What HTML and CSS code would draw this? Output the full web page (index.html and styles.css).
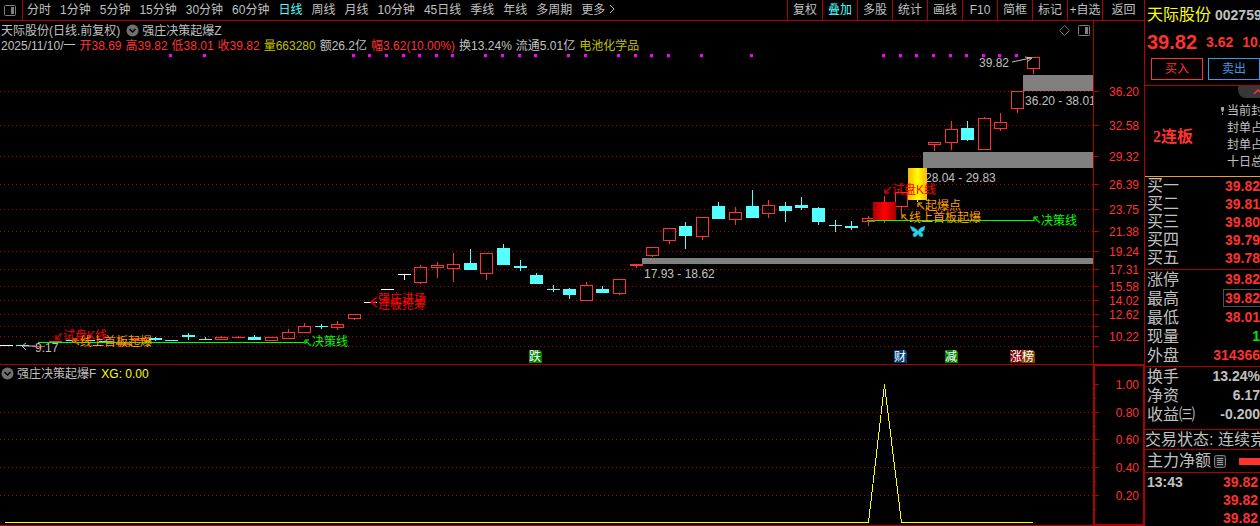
FILE: index.html
```
<!DOCTYPE html>
<html lang="zh-CN">
<head>
    <meta charset="UTF-8">
    <meta name="viewport" content="width=device-width, initial-scale=1.0">
    <title>天际股份 002759</title>
    <link rel="stylesheet" href="styles.css">
</head>
<body>

<div class="app">
    <main class="main">
        <!-- Period toolbar -->
        <nav class="toolbar">
            <button class="panel-toggle" aria-label="面板">
                <svg width="12" height="11" viewBox="0 0 12 11"><rect x="0.5" y="0.5" width="11" height="10" rx="1" fill="none" stroke="#808080"/><rect x="7" y="2" width="3" height="7" fill="#808080"/></svg>
            </button>
            <div class="periods">
                <button>分时</button>
                <button>1分钟</button>
                <button>5分钟</button>
                <button>15分钟</button>
                <button>30分钟</button>
                <button>60分钟</button>
                <button class="active">日线</button>
                <button>周线</button>
                <button>月线</button>
                <button>10分钟</button>
                <button>45日线</button>
                <button>季线</button>
                <button>年线</button>
                <button>多周期</button>
                <button>更多 <svg width="6" height="10" viewBox="0 0 6 10"><path d="M1 1l4 4-4 4" fill="none" stroke="#c0c0c0"/></svg></button>
            </div>
            <div class="tools">
                <button>复权</button>
                <button class="active">叠加</button>
                <button>多股</button>
                <button>统计</button>
                <button>画线</button>
                <button>F10</button>
                <button>简框</button>
                <button>标记</button>
                <button>+自选</button>
                <button class="back">返回</button>
            </div>
        </nav>

        <!-- Price chart -->
        <section class="pane">
            <svg class="chart" viewBox="0 21 1144 343">
                <defs>
                    <linearGradient id="gradRed">
                        <stop offset="0" stop-color="#a80000"/><stop offset="0.5" stop-color="#ff0000"/><stop offset="1" stop-color="#a80000"/>
                    </linearGradient>
                    <linearGradient id="gradYellow">
                        <stop offset="0" stop-color="#ffb400"/><stop offset="0.5" stop-color="#ffff00"/><stop offset="1" stop-color="#ffb400"/>
                    </linearGradient>
                    <clipPath id="plotClip"><rect x="0" y="21" width="1093" height="343"/></clipPath>
                </defs>
                <g id="grid" class="crisp"></g>
                <g class="crisp" fill="#808080">
                    <rect x="642" y="258" width="451" height="6"/>
                    <rect x="923" y="152" width="170" height="16"/>
                    <rect x="1023" y="75" width="70" height="16"/>
                </g>
                <g id="dots" class="crisp"></g>
                <g id="candles" class="crisp"></g>
                <g class="crisp">
                    <rect x="884" y="196" width="1" height="27" fill="#ff3232"/>
                    <rect x="873" y="202" width="23" height="18" fill="url(#gradRed)"/>
                    <rect x="917" y="200" width="1" height="2" fill="#ffff00"/>
                    <rect x="908" y="168" width="19" height="32" fill="url(#gradYellow)"/>
                    <rect x="38" y="342" width="270" height="1" fill="#00ff00"/>
                    <rect x="867" y="220" width="168" height="1" fill="#00ff00"/>
                </g>
                <!-- signal arrows -->
                <g fill="none">
                    <path d="M62 333l-6 6m0-4v4h4M891 187l-6 6m0-4v4h4M377 297l-6 5 6 5m-6-5h5" stroke="#d00000" stroke-width="1.5"/>
                    <path d="M305 340h4m-4 0v4m0-4l6 6M1034 217h4m-4 0v4m0-4l6 6" stroke="#00c800" stroke-width="1.5"/>
                    <path d="M73 339h4m-4 0v4m0-4l6 6M918 203h4m-4 0v4m0-4l6 6M902 215h4m-4 0v4m0-4l6 6" stroke="#d08000" stroke-width="1.5"/>
                    <path d="M35 346H22m4-3l-4 3 4 4M1012 62l19-4m-6-1l7 1-5 4" stroke="#c0c0c0"/>
                </g>
                <!-- butterfly mark -->
                <path d="M918 231c-2-3-5-4-8-5 1 3 2 6 5 6-2 1-3 3-1 5 2 0 3-1 4-3 1 2 2 3 4 3 2-2 1-4-1-5 3 0 4-3 4-6-3 1-6 2-7 5z" fill="#28d2e6" stroke="#0c7f90" stroke-width="0.5"/>
                <g class="label" clip-path="url(#plotClip)">
                    <text x="35" y="352">9.17</text>
                    <text x="979" y="67">39.82</text>
                    <text x="644" y="278">17.93 - 18.62</text>
                    <text x="925" y="182">28.04 - 29.83</text>
                    <text x="1025" y="105">36.20 - 38.01</text>
                    <g fill="#ff0000">
                        <text x="63" y="340">试盘K线</text>
                        <text x="378" y="303">强庄进场</text>
                        <text x="378" y="309">连板抢筹</text>
                        <text x="892" y="194">试盘K线</text>
                    </g>
                    <g fill="#ffa000">
                        <text x="80" y="346">线上首板起爆</text>
                        <text x="925" y="210">起爆点</text>
                        <text x="909" y="222">线上首板起爆</text>
                    </g>
                    <g fill="#00ff00">
                        <text x="312" y="346">决策线</text>
                        <text x="1041" y="225">决策线</text>
                    </g>
                </g>
                <!-- event badges -->
                <g class="badge">
                    <path d="M529 350h11l2 2v11h-13z" fill="#008000"/><text x="529" y="361">跌</text>
                    <path d="M894 350h11l2 2v11h-13z" fill="#003c78"/><text x="894" y="361">财</text>
                    <path d="M945 350h11l2 2v11h-13z" fill="#008000"/><text x="945" y="361">减</text>
                    <path d="M1010 350h12v13h-12z" fill="#800000"/><text x="1010" y="361">涨</text>
                    <path d="M1022 350h11l2 2v11h-13z" fill="#804000"/><text x="1022" y="361">榜</text>
                </g>
                <rect class="crisp" x="1093" y="21" width="1" height="343" fill="#b00000"/>
            </svg>
            <div class="legend">
                <div class="legend-row">
                    <span>天际股份(日线.前复权)</span>
                    <svg class="fold" width="13" height="13" viewBox="0 0 13 13"><circle cx="6.5" cy="6.5" r="6" fill="#707070"/><path d="M3.5 5l3 3 3-3" fill="none" stroke="#000" stroke-width="1.5"/></svg>
                    <span>强庄决策起爆Z</span>
                    <span class="legend-icons">
                        <svg width="11" height="11" viewBox="0 0 11 11"><path d="M5.5 0.5l5 5-5 5-5-5z" fill="none" stroke="#707070"/></svg>
                        <svg width="12" height="11" viewBox="0 0 12 11"><rect x="0.5" y="0.5" width="11" height="10" rx="1" fill="none" stroke="#808080"/><rect x="7" y="2" width="3" height="7" fill="#808080"/></svg>
                    </span>
                </div>
                <div class="legend-row quote-line">
                    <span>2025/11/10/一</span>
                    <span class="up">开38.69</span>
                    <span class="up">高39.82</span>
                    <span class="up">低38.01</span>
                    <span class="up">收39.82</span>
                    <span class="vol">量663280</span>
                    <span>额26.2亿</span>
                    <span class="up">幅3.62(10.00%)</span>
                    <span>换13.24%</span>
                    <span>流通5.01亿</span>
                    <span class="vol">电池化学品</span>
                </div>
            </div>
        </section>

        <!-- Indicator chart -->
        <section class="pane">
            <svg class="chart" viewBox="0 364 1144 162">
                <g id="subgrid" class="crisp"></g>
                <path class="crisp" d="M5 522.5H868.5L884.5 384.5L901.5 522.5H1033" fill="none" stroke="#ffff00"/>
                <g class="crisp" fill="#b00000">
                    <rect x="0" y="364" width="1144" height="1"/>
                    <rect x="0" y="525" width="1144" height="1"/>
                    <rect x="1093" y="364" width="51" height="2"/>
                    <rect x="1093" y="364" width="2" height="162"/>
                    <rect x="1143" y="364" width="1" height="162"/>
                    <rect x="1093" y="524" width="51" height="2"/>
                </g>
            </svg>
            <div class="legend">
                <div class="legend-row">
                    <svg width="13" height="13" viewBox="0 0 13 13"><circle cx="6.5" cy="6.5" r="6" fill="#707070"/><path d="M3.5 5l3 3 3-3" fill="none" stroke="#000" stroke-width="1.5"/></svg>
                    <span>强庄决策起爆F</span>
                    <span class="xg">XG: 0.00</span>
                </div>
            </div>
        </section>
    </main>

    <!-- Quote panel -->
    <aside class="side">
        <div class="stock"><span class="stock-name">天际股份</span><b>002759</b></div>
        <div class="price"><b class="last">39.82</b><b>3.62</b><b>10.00%</b></div>
        <div class="trade">
            <button class="buy">买入</button>
            <button class="sell">卖出</button>
        </div>
        <div class="limit">
            <b class="streak">2连板</b>
            <div class="tab"><svg width="10" height="6" viewBox="0 0 10 6"><path d="M1 5l4-4 4 4" fill="none" stroke="#ff3232" stroke-width="1.5"/></svg></div>
            <ul>
                <li class="first"><svg width="3" height="9" viewBox="0 0 3 9"><path d="M0 1h3v3L2 6H1L0 4zM1 7h1v2H1z" fill="#a0a0a0"/></svg>当前封单</li>
                <li>封单占成交</li>
                <li>封单占流通</li>
                <li>十日总涨停</li>
            </ul>
        </div>
        <table class="bids">
            <tr><th>买一</th><td>39.82</td></tr>
            <tr><th>买二</th><td>39.81</td></tr>
            <tr><th>买三</th><td>39.80</td></tr>
            <tr><th>买四</th><td>39.79</td></tr>
            <tr><th>买五</th><td>39.78</td></tr>
        </table>
        <table class="stats">
            <tr><th>涨停</th><td>39.82</td></tr>
            <tr><th>最高</th><td><span class="boxed">39.82</span></td></tr>
            <tr><th>最低</th><td>38.01</td></tr>
            <tr><th>现量</th><td class="down">1</td></tr>
            <tr><th>外盘</th><td>314366</td></tr>
        </table>
        <table class="stats plain">
            <tr><th>换手</th><td>13.24%</td></tr>
            <tr><th>净资</th><td>6.17</td></tr>
            <tr><th>收益㈢</th><td>-0.200</td></tr>
        </table>
        <div class="status">交易状态: 连续竞价</div>
        <div class="flow">
            <span>主力净额</span>
            <svg width="12" height="13" viewBox="0 0 12 13"><rect x="0.5" y="0.5" width="11" height="12" rx="2" fill="#202020" stroke="#808080"/><path d="M3 3.5h6M3 5.5h6M3 7.5h6M3 9.5h6" stroke="#a0a0a0"/></svg>
            <i class="flow-bar"></i>
        </div>
        <table class="ticks">
            <tr><th>13:43</th><td>39.82</td></tr>
            <tr><th></th><td>39.82</td></tr>
            <tr><th></th><td>39.82</td></tr>
        </table>
    </aside>
</div>

<script src="script.js"></script>
</body>
</html>
```
FILE: styles.css
```
* {
    box-sizing: border-box;
}
body {
    margin: 0;
    background: #000;
    color: #c0c0c0;
    font: 12px/14px "Liberation Sans", "Noto Sans CJK SC", sans-serif;
    overflow: hidden;
}
button {
    padding: 0;
    border: 0;
    background: none;
    color: inherit;
    font: inherit;
    white-space: nowrap;
    cursor: pointer;
}
.app {
    display: grid;
    grid-template-columns: minmax(0, 1fr) 116px;
    min-height: 100vh;
}

/* Toolbar */
.toolbar {
    display: flex;
    height: 21px;
    border-bottom: 1px solid #b00000;
}
.panel-toggle {
    width: 23px;
    border-right: 1px solid #b00000;
}
.panel-toggle svg {
    display: block;
    margin: 0 4px;
}
.periods {
    display: flex;
    gap: 9px;
    padding-left: 4px;
}
.tools {
    display: flex;
    margin-left: auto;
}
.tools button {
    width: 35px;
    border-left: 1px solid #b00000;
}
.tools .back {
    width: 42px;
}
.toolbar .active {
    color: #54ffff;
}

/* Charts */
.pane {
    position: relative;
}
.chart {
    display: block;
    width: 100%;
    height: auto;
}
.crisp {
    shape-rendering: crispEdges;
}
.label {
    fill: #c0c0c0;
}
.axis-label {
    fill: #ff3232;
    text-anchor: end;
}
.badge text {
    fill: #fff;
}
.legend {
    position: absolute;
    top: 2px;
    left: 0;
    right: 54px;
    padding-left: 1px;
}
.legend-row {
    display: flex;
    align-items: center;
    gap: 3px;
    height: 15px;
    white-space: nowrap;
}
.legend-row .fold {
    margin-left: 3px;
}
.quote-line {
    gap: 4px;
}
.legend-icons {
    display: flex;
    gap: 8px;
    margin-left: auto;
}
.up {
    color: #ff3232;
}
.vol {
    color: #c0c000;
}
.xg {
    color: #ffff00;
    margin-left: 2px;
}

/* Quote panel */
.side {
    border-left: 1px solid #b00000;
    overflow: hidden;
    white-space: nowrap;
}
.side b,
.side td {
    font-size: 14px;
    font-weight: bold;
}
.stock {
    display: flex;
    align-items: center;
    gap: 4px;
    height: 30px;
    padding-left: 2px;
}
.stock-name {
    color: #ffff00;
    font-size: 16px;
}
.price {
    display: flex;
    align-items: center;
    gap: 9px;
    height: 24px;
    padding-left: 2px;
    color: #ff3232;
}
.side .last {
    font-size: 20px;
}
.trade {
    display: flex;
    gap: 5px;
    height: 32px;
    padding: 4px 0 5px 6px;
    border-bottom: 1px solid #b00000;
}
.trade button {
    flex: 0 0 52px;
    border: 1px solid #ff3232;
    color: #ff3232;
}
.trade .sell {
    border-color: #4696e6;
    color: #4696e6;
}
.limit {
    position: relative;
    display: flex;
    align-items: center;
    height: 91px;
    padding: 12px 0 0 8px;
    border-bottom: 1px solid #e6a03c;
}
.side .streak {
    flex: 0 0 68px;
    color: #ff3232;
    font-family: "Liberation Serif", "Noto Sans CJK SC", serif;
    font-size: 16px;
}
.limit ul {
    margin: 0;
    padding: 0;
    list-style: none;
    line-height: 17px;
}
.limit li {
    padding-left: 6px;
}
.limit .first {
    padding-left: 0;
}
.limit li svg {
    margin-right: 3px;
}
.tab {
    position: absolute;
    top: 0;
    right: -18px;
    width: 40px;
    height: 12px;
    border-radius: 0 0 8px 8px;
    background: #373737;
    line-height: 10px;
    text-align: center;
}
table {
    width: 100%;
    border-collapse: collapse;
}
.side th {
    padding: 0 0 0 2px;
    font-size: 16px;
    font-weight: normal;
    text-align: left;
}
.side td {
    padding: 0;
    color: #ff3232;
    text-align: right;
}
.bids tr {
    height: 18px;
}
.bids {
    border-bottom: 2px solid #000;
    line-height: 18px;
}
.stats {
    margin-bottom: 1px;
    border-top: 1px solid #b00000;
    line-height: 19px;
}
.stats .down {
    color: #00e600;
}
.boxed {
    display: inline-block;
    padding-left: 1px;
    line-height: 16px;
    outline: 1px solid #505050;
}
.side .plain td {
    color: #c0c0c0;
}
.status {
    margin-top: 5px;
    border-top: 1px solid #b00000;
    border-bottom: 1px solid #b00000;
    font-size: 16px;
    line-height: 19px;
}
.flow {
    display: flex;
    align-items: center;
    gap: 3px;
    height: 23px;
    padding-left: 2px;
    border-bottom: 1px solid #b00000;
    font-size: 16px;
}
.flow-bar {
    flex: 1;
    height: 7px;
    margin-left: 10px;
    background: #ff3232;
}
.ticks {
    line-height: 18px;
}
.side .ticks th {
    font-size: 14px;
    font-weight: bold;
}
.side .ticks td {
    padding-right: 2px;
}
```
FILE: script.js
```
const RED = '#ff3232';
const CYAN = '#54ffff';
const WHITE = '#ffffff';
const LINE = '#b00000';

function add(parent, tag, attrs, text) {
    const el = document.createElementNS('http://www.w3.org/2000/svg', tag);
    for (const key in attrs) el.setAttribute(key, attrs[key]);
    if (text) el.textContent = text;
    parent.appendChild(el);
}

function bar(parent, x, y, width, height, fill) {
    add(parent, 'rect', { x, y, width, height, fill });
}

// Horizontal dotted line, tick and axis label
function level(parent, y, text, dotted) {
    if (dotted) {
        add(parent, 'path', { d: `M0 ${y + 0.5}H1093`, stroke: LINE, 'stroke-dasharray': '1 3' });
    }
    bar(parent, 1093, y, 6, 1, LINE);
    add(parent, 'text', { class: 'axis-label', x: 1139, y: y + 5 }, text);
}

const grid = document.getElementById('grid');
const levels = [
    [91, '36.20'], [125, '32.58'], [156, '29.32'], [184, '26.39'], [209, '23.75'],
    [231, '21.38'], [251, '19.24'], [269, '17.31'], [286, '15.58'], [300, '14.02'],
    [314, '12.62'], [326, ''], [336, '10.22'], [346, '']
];
levels.forEach(([y, text]) => level(grid, y, text, true));

const subgrid = document.getElementById('subgrid');
const subLevels = [[384, '1.00'], [412, '0.80'], [439, '0.60'], [467, '0.40'], [495, '0.20']];
subLevels.forEach(([y, text], i) => {
    level(subgrid, y, text, i > 0);
    bar(subgrid, 1093, y + 14, 3, 1, LINE);
});

const dots = document.getElementById('dots');
[169, 203, 352, 368, 385, 402, 418, 435, 451, 484, 501, 518, 534, 567, 584, 617, 634, 650, 667,
    700, 750, 882, 899, 915, 932, 949, 965, 982, 998, 1015].forEach(x => bar(dots, x, 54, 3, 3, '#ff00ff'));

// [left, body top, body bottom, high, low, color]
const candles = [
    [0, 345, 346, 345, 346, WHITE], [16, 345, 346, 345, 346, CYAN], [32, 346, 347, 346, 347, RED],
    [49, 341, 342, 341, 342, RED], [66, 340, 341, 339, 342, CYAN], [82, 340, 341, 340, 341, CYAN],
    [99, 341, 342, 340, 343, CYAN], [116, 343, 345, 343, 345, RED], [132, 338, 341, 338, 341, RED],
    [149, 338, 340, 337, 341, CYAN], [165, 340, 341, 340, 341, CYAN], [182, 335, 337, 333, 340, CYAN],
    [199, 339, 340, 337, 340, CYAN], [215, 337, 340, 336, 340, RED], [232, 337, 338, 336, 338, RED],
    [248, 337, 340, 335, 340, CYAN], [265, 337, 341, 337, 341, RED], [282, 332, 339, 329, 339, RED],
    [298, 326, 333, 323, 333, RED], [315, 326, 327, 324, 329, CYAN], [331, 324, 328, 321, 330, RED],
    [348, 314, 319, 314, 320, RED], [364, 302, 303, 302, 303, WHITE], [381, 289, 290, 289, 290, WHITE],
    [398, 274, 275, 274, 280, WHITE], [414, 267, 283, 265, 284, RED], [431, 265, 268, 262, 278, RED],
    [447, 264, 269, 253, 282, RED], [464, 263, 270, 249, 270, CYAN], [480, 253, 274, 253, 280, RED],
    [497, 248, 265, 244, 265, CYAN], [514, 266, 268, 260, 271, CYAN], [530, 275, 284, 273, 284, CYAN],
    [547, 289, 290, 285, 292, CYAN], [563, 289, 295, 288, 299, CYAN], [580, 285, 301, 282, 301, RED],
    [596, 289, 293, 286, 293, CYAN], [613, 279, 294, 279, 295, RED], [630, 264, 266, 264, 268, RED],
    [646, 247, 256, 247, 257, RED], [663, 228, 241, 228, 244, RED], [679, 226, 236, 222, 249, CYAN],
    [696, 217, 237, 217, 240, RED], [712, 206, 219, 202, 219, CYAN], [729, 212, 220, 207, 225, RED],
    [746, 206, 218, 190, 218, CYAN], [762, 205, 214, 200, 218, RED], [779, 206, 211, 202, 222, CYAN],
    [795, 205, 208, 197, 210, CYAN], [812, 208, 222, 207, 225, CYAN], [829, 225, 226, 220, 232, CYAN],
    [845, 226, 228, 221, 230, CYAN], [862, 218, 222, 216, 226, RED], [895, 192, 207, 192, 215, RED],
    [928, 142, 145, 142, 151, RED], [945, 129, 143, 121, 150, RED], [961, 128, 140, 121, 141, CYAN],
    [978, 118, 150, 117, 150, RED], [994, 122, 129, 113, 131, RED], [1011, 91, 109, 91, 113, RED],
    [1027, 57, 69, 57, 74, RED]
];
const layer = document.getElementById('candles');
candles.forEach(([x, top, bottom, high, low, color]) => {
    if (high < top) bar(layer, x + 6, high, 1, top - high, color);
    if (low > bottom) bar(layer, x + 6, bottom, 1, low - bottom, color);
    if (color === RED && bottom - top > 2) {
        add(layer, 'rect', { x: x + 0.5, y: top + 0.5, width: 12, height: bottom - top - 1, fill: 'none', stroke: RED });
    } else {
        bar(layer, x, top, 13, bottom - top, color);
    }
});
```
